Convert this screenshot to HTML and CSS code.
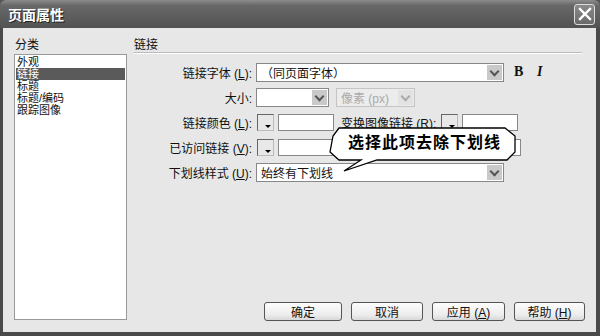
FILE: index.html
```html
<!DOCTYPE html>
<html lang="zh-CN">
<head>
    <meta charset="UTF-8">
    <meta name="viewport" content="width=device-width, initial-scale=1.0">
    <title>页面属性</title>
    <link rel="stylesheet" href="styles.css">
</head>
<body>
    <div class="window">
        <div class="titlebar">
            <span class="title">页面属性</span>
            <span class="close">
                <svg width="14" height="14" viewBox="0 0 14 14">
                    <path d="M2 2 L12 12 M12 2 L2 12" stroke="#fff" stroke-width="2.4" stroke-linecap="square"/>
                </svg>
            </span>
        </div>
        <div class="dialog-body">
            <div class="sidebar">
                <div class="section-label">分类</div>
                <ul class="category-list">
                    <li>外观</li>
                    <li class="selected">链接</li>
                    <li>标题</li>
                    <li>标题/编码</li>
                    <li>跟踪图像</li>
                </ul>
            </div>
            <div class="main">
                <div class="heading">链接</div>
                <div class="form">
                    <div class="row">
                        <label class="field-label">链接字体 (<u>L</u>):</label>
                        <div class="combo wide"><span>（同页面字体）</span><i class="arrow"></i></div>
                        <span class="style-btn bold">B</span>
                        <span class="style-btn italic">I</span>
                    </div>
                    <div class="row">
                        <label class="field-label">大小:</label>
                        <div class="combo small"><span></span><i class="arrow"></i></div>
                        <div class="combo unit disabled"><span>像素 (px)</span><i class="arrow"></i></div>
                    </div>
                    <div class="row">
                        <label class="field-label">链接颜色 (<u>L</u>):</label>
                        <span class="swatch"></span>
                        <span class="text-input"></span>
                        <label class="inline-label"><u>变换图像链接 (R):</u></label>
                        <span class="swatch"></span>
                        <span class="text-input"></span>
                    </div>
                    <div class="row">
                        <label class="field-label">已访问链接 (<u>V</u>):</label>
                        <span class="swatch"></span>
                        <span class="text-input"></span>
                        <span class="hidden-gap"></span>
                        <span class="swatch"></span>
                        <span class="text-input"></span>
                    </div>
                    <div class="row">
                        <label class="field-label">下划线样式 (<u>U</u>):</label>
                        <div class="combo wide"><span>始终有下划线</span><i class="arrow"></i></div>
                    </div>
                </div>
                <div class="buttons">
                    <button class="ok">确定</button>
                    <button class="cancel">取消</button>
                    <button class="apply">应用 (<u>A</u>)</button>
                    <button class="help">帮助 (<u>H</u>)</button>
                </div>
            </div>
        </div>

        <div class="callout">
            <svg width="190" height="46" viewBox="0 0 190 46">
                <polygon points="10,1 176,1 186,9 186,25 178,33 48,33 15,44 32,33 10,33 1,25 4,9"
                         fill="#fff" stroke="#000" stroke-width="1.3"/>
            </svg>
            <span class="callout-text">选择此项去除下划线</span>
        </div>
    </div>
</body>
</html>
```

FILE: styles.css
```css
* {
    box-sizing: border-box;
}
body {
    margin: 0;
    background: #555;
    font-family: "Liberation Sans", "Noto Sans CJK SC", sans-serif;
    font-size: 12px;
    color: #111;
}
.window {
    position: relative;
    width: 600px;
    height: 336px;
    background: #4a4a4a;
    border-radius: 6px 6px 0 0;
    overflow: hidden;
}
.titlebar {
    height: 28px;
    display: flex;
    align-items: center;
    justify-content: space-between;
    padding: 0 5px 0 8px;
    background: linear-gradient(#8c8c8c, #676767 20%, #5d5d5d 60%, #525252);
}
.title {
    color: #fff;
    font-weight: bold;
    font-size: 14px;
    text-shadow: 1px 1px 0 #222;
}
.close {
    width: 21px;
    height: 21px;
    display: flex;
    align-items: center;
    justify-content: center;
    border: 1px solid #ddd;
    border-radius: 3px;
    background: linear-gradient(#8a8a8a, #6a6a6a);
}
.dialog-body {
    display: flex;
    height: 304px;
    margin: 0 4px 0 3px;
    padding: 10px 11px 12px 11px;
    background: #e7e7e7;
}
.sidebar {
    width: 113px;
    display: flex;
    flex-direction: column;
}
.section-label {
    height: 14px;
    line-height: 14px;
    padding-left: 1px;
    margin-bottom: 2px;
}
.category-list {
    flex: 1;
    margin: 0;
    padding: 1px;
    list-style: none;
    background: #fff;
    border: 1px solid #999;
}
.category-list li {
    height: 12px;
    line-height: 12px;
    font-size: 11px;
    padding-left: 1px;
}
.category-list li.selected {
    background: #5a5a5a;
    color: #fff;
}
.main {
    flex: 1;
    margin-left: 7px;
    display: flex;
    flex-direction: column;
}
.heading {
    height: 15px;
    line-height: 14px;
    margin-right: 3px;
    border-bottom: 1px solid #bbb;
    box-shadow: 0 1px 0 #fff;
}
.form {
    margin-top: 9px;
    display: flex;
    flex-direction: column;
    gap: 5px;
}
.row {
    height: 20px;
    display: flex;
    align-items: center;
}
.field-label {
    width: 118px;
    text-align: right;
    margin-right: 4px;
}
.combo {
    height: 19px;
    display: flex;
    align-items: center;
    justify-content: space-between;
    padding: 1px 1px 1px 4px;
    background: #fff;
    border: 1px solid #888;
}
.combo.wide {
    width: 248px;
}
.combo.small {
    width: 73px;
}
.combo.unit {
    width: 79px;
    margin-left: 7px;
}
.combo.disabled {
    background: #ececec;
    border-color: #c4c4c4;
    color: #aaa;
}
.arrow {
    width: 15px;
    height: 15px;
    background: #c9c9c9;
    position: relative;
}
.arrow::after {
    content: "";
    position: absolute;
    left: 4px;
    top: 3px;
    width: 5px;
    height: 5px;
    border-right: 2px solid #555;
    border-bottom: 2px solid #555;
    transform: rotate(45deg);
}
.disabled .arrow {
    background: #e2e2e2;
}
.disabled .arrow::after {
    border-color: #aaa;
}
.style-btn {
    font-family: "Liberation Serif", serif;
    font-size: 14px;
    font-weight: bold;
    margin-left: 10px;
    width: 12px;
}
.style-btn.italic {
    font-style: italic;
    margin-left: 11px;
}
.swatch {
    position: relative;
    width: 17px;
    height: 17px;
    margin-left: 1px;
    border: 1px solid #666;
    border-right-color: #bbb;
    border-bottom-color: #bbb;
    background: #e8e8e8;
}
.swatch::after {
    content: "";
    position: absolute;
    right: 2px;
    bottom: 2px;
    border-left: 3px solid transparent;
    border-right: 3px solid transparent;
    border-top: 3px solid #000;
}
.text-input {
    width: 56px;
    height: 17px;
    margin-left: 4px;
    background: #fff;
    border: 1px solid #888;
}
.inline-label {
    margin-left: 7px;
    margin-right: 4px;
}
.hidden-gap {
    width: 109px;
}
.buttons {
    margin-top: auto;
    margin-bottom: -1px;
    display: flex;
    justify-content: flex-end;
    gap: 9px;
}
.buttons button {
    height: 19px;
    padding: 0;
    font: inherit;
    color: #111;
    background: linear-gradient(#fdfdfd, #ececec 70%, #d8d8d8);
    border: 1px solid #555;
    border-radius: 3px;
}
.buttons .ok {
    width: 78px;
}
.buttons .cancel {
    width: 72px;
}
.buttons .apply {
    width: 73px;
}
.buttons .help {
    width: 71px;
}
.callout {
    position: absolute;
    left: 329px;
    top: 127px;
    width: 190px;
    height: 46px;
}
.callout svg {
    position: absolute;
    left: 0;
    top: 0;
}
.callout-text {
    position: absolute;
    left: 19px;
    top: 6px;
    font-size: 16px;
    font-weight: bold;
    line-height: 20px;
    color: #000;
    letter-spacing: 1px;
}
```
